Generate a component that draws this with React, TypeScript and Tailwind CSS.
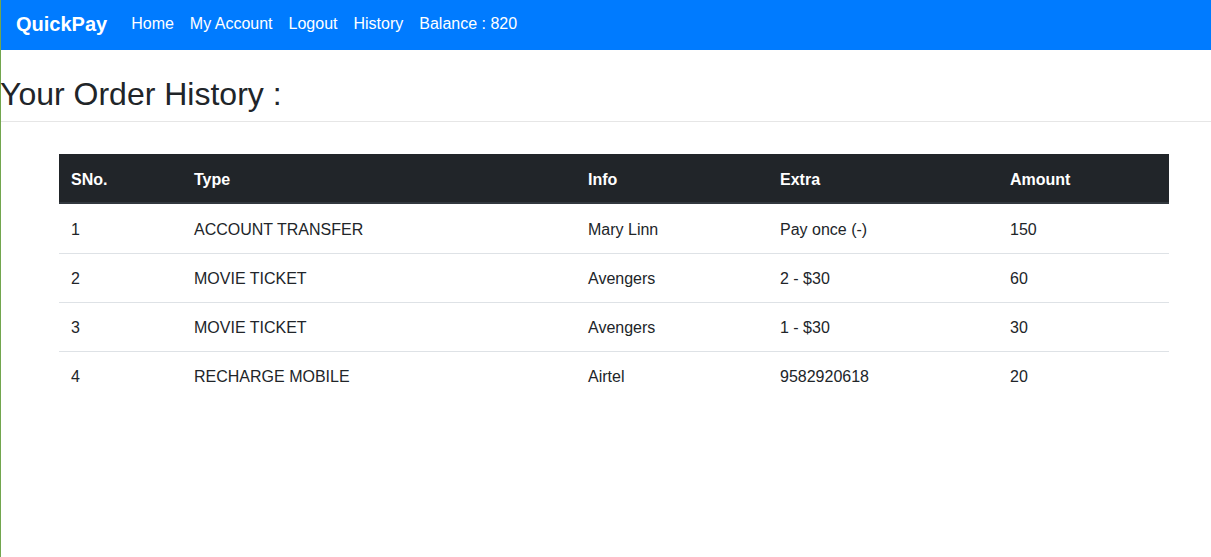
import React from "react";

const rows = [
  ["1", "ACCOUNT TRANSFER", "Mary Linn", "Pay once (-)", "150"],
  ["2", "MOVIE TICKET", "Avengers", "2 - $30", "60"],
  ["3", "MOVIE TICKET", "Avengers", "1 - $30", "30"],
  ["4", "RECHARGE MOBILE", "Airtel", "9582920618", "20"],
];

const widths = ["w-[123px]", "w-[394px]", "w-[192px]", "w-[230px]", "w-[171px]"];

export default function App() {
  return (
    <div className="min-h-[557px] bg-white border-l border-[#72a64e] text-[#212529] font-['Liberation_Sans',Arial,sans-serif]">
      <nav className="h-[50px] bg-[#007bff] flex items-center pl-[15px] pb-[2px]">
        <span className="text-white font-bold text-[20px] mr-4">QuickPay</span>
        <div className="flex text-white text-[16px]">
          {["Home", "My Account", "Logout", "History", "Balance : 820"].map((l) => (
            <span key={l} className="px-2">{l}</span>
          ))}
        </div>
      </nav>
      <h2 className="text-[32px] leading-[1.2] mt-[25px] mb-[8px] font-normal -ml-px">Your Order History :</h2>
      <div className="border-t border-[#e6e6e6]" />
      <div className="pl-[58px] pt-[32px]">
        <table className="w-[1110px] border-separate border-spacing-0 text-[16px] leading-6">
          <thead>
            <tr className="bg-[#212529] text-white">
              {["SNo.", "Type", "Info", "Extra", "Amount"].map((h, i) => (
                <th key={h} className={`${widths[i]} text-left font-bold px-3 pt-[14px] pb-[10px] border-b-2 border-[#32383e]`}>{h}</th>
              ))}
            </tr>
          </thead>
          <tbody>
            {rows.map((r, ri) => (
              <tr key={ri}>
                {r.map((c, ci) => (
                  <td key={ci} className={`px-3 pt-[13px] pb-[11px] border-t ${ri > 0 ? "border-[#dee2e6]" : "border-white"}`}>{c}</td>
                ))}
              </tr>
            ))}
          </tbody>
        </table>
      </div>
    </div>
  );
}
